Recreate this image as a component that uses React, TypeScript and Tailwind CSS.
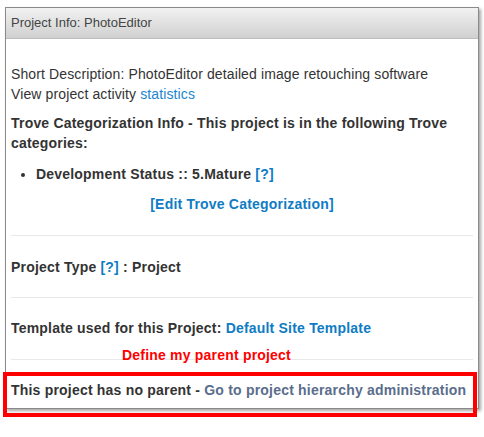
import React from "react";

function Separator() {
  return <div className="h-px bg-[#e8e8e8]" />;
}

export default function App() {
  return (
    <div
      className="relative w-[484px] h-[437px] bg-white text-[14px] leading-5 text-[#333] tracking-[0.12px]"
      style={{ fontFamily: '"Liberation Sans", Arial, sans-serif' }}
    >
      {/* panel */}
      <div className="absolute left-[5px] top-[7px] w-[474px] border border-[#8a8a8a] bg-white shadow-[2px_2px_3px_rgba(0,0,0,0.35)]">
        <div className="h-[31px] flex items-center px-[5px] text-[13px] tracking-normal text-[#444] bg-gradient-to-b from-[#f2f2f2] to-[#d0d0d0] border-b border-[#bdbdbd]">
          Project Info: PhotoEditor
        </div>
        <div className="px-[5px]">
          <div className="pt-[25px] pb-[21px]">
            <div>Short Description: PhotoEditor detailed image retouching software</div>
            <div>
              View project activity <a className="text-[#1a86cf]">statistics</a>
            </div>
            <div className="mt-[9px] font-bold tracking-[0.2px]">
              Trove Categorization Info - This project is in the following Trove categories:
            </div>
            <ul className="mt-[11px] pl-[25px] list-disc font-bold tracking-[0.2px]">
              <li>
                Development Status :: 5.Mature <a className="text-[#0f7cc4]">[?]</a>
              </li>
            </ul>
            <div className="mt-[10px] text-center font-bold tracking-[0.2px]">
              <a className="text-[#0f7cc4]">[Edit Trove Categorization]</a>
            </div>
          </div>
          <Separator />
          <div className="pt-[21px] pb-[20px] font-bold tracking-[0.2px]">
            Project Type <a className="text-[#0f7cc4]">[?]</a> : Project
          </div>
          <Separator />
          <div className="pt-[20px] pb-[21px] font-bold tracking-[0.2px]">
            Template used for this Project: <a className="text-[#0f7cc4]">Default Site Template</a>
          </div>
          <Separator />
          <div className="pt-[20px] pb-[8px] font-bold tracking-[0.2px]">
            This project has no parent - <a className="text-[#5a6d8c]">Go to project hierarchy administration</a>
          </div>
        </div>
      </div>

      {/* annotations */}
      <div className="absolute left-[122px] top-[345px] font-bold tracking-[0.2px] text-[#ff0000]">
        Define my parent project
      </div>
      <div className="absolute left-[3px] top-[372px] w-[474px] h-[45px] border-4 border-[#ff0000]" />
    </div>
  );
}
